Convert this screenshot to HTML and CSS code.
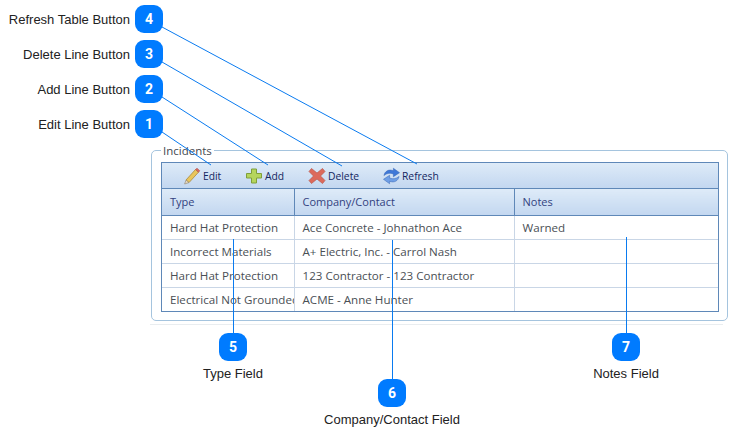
FILE: index.html
```html
<!DOCTYPE html>
<html>
  <head>
    <meta charset="UTF-8">
    <title>Incidents</title>
    <link rel="stylesheet" href="styles.css">
  </head>
  <body>
    <div class="screen">
      <fieldset class="panel">
        <legend>Incidents</legend>
        <div class="grid">
          <div class="toolbar">
            <button class="tool tool-edit">
              <svg width="18" height="18" viewBox="0 0 18 18">
                <path d="M3 13 L12.500 2.500 L15.500 5.200 L6 15.600 Z" fill="#e9c65c" stroke="#a98a3e" stroke-width="0.8"/>
                <path d="M12.500 2.500 L14 1.200 L16.800 3.800 L15.500 5.200 Z" fill="#d9695f" stroke="#b5534b" stroke-width="0.6"/>
                <path d="M3 13 L1.600 17 L6 15.600 Z" fill="#e8d9bd" stroke="#8d8371" stroke-width="0.6"/>
              </svg>
              Edit
            </button>
            <button class="tool tool-add">
              <svg width="18" height="18" viewBox="0 0 18 18">
                <path d="M6.500 2 H11.500 V6.500 H16.500 V11 H11.500 V16 H6.500 V11 H1.500 V6.500 H6.500 Z" fill="#b5d55c" stroke="#7f9f3a" stroke-linejoin="round"/>
              </svg>
              Add
            </button>
            <button class="tool tool-delete">
              <svg width="18" height="18" viewBox="0 0 18 18">
                <path d="M3.500 1.500 L9 6 L14.500 1.500 L17 4.500 L12.500 9 L17 13.500 L14.500 16.500 L9 12 L3.500 16.500 L1 13.500 L5.500 9 L1 4.500 Z" fill="#dc6a5c" stroke="#b9574c" stroke-width="0.7" stroke-linejoin="round"/>
              </svg>
              Delete
            </button>
            <button class="tool tool-refresh">
              <svg width="17" height="18" viewBox="0 0 18 18">
                <path d="M1 8.500 C2 3.500 6.500 1.500 11 3.500 L11 0.800 L17.500 5.500 L11 9.800 L11 6.800 C7.500 5.500 4 6 1 8.500 Z" fill="#3f78d8" stroke="#2f5fb0" stroke-width="0.5"/>
                <path d="M17 9.500 C16 14.500 11.500 16.500 7 14.500 L7 17.200 L0.500 12.500 L7 8.200 L7 11.200 C10.500 12.500 14 12 17 9.500 Z" fill="#6f9fe6" stroke="#2f5fb0" stroke-width="0.5"/>
              </svg>
              Refresh
            </button>
          </div>
          <table class="lines">
            <colgroup>
              <col class="col-type">
              <col class="col-company">
              <col class="col-notes">
            </colgroup>
            <thead>
              <tr><th>Type</th><th>Company/Contact</th><th>Notes</th></tr>
            </thead>
            <tbody>
              <tr><td>Hard Hat Protection</td><td>Ace Concrete - Johnathon Ace</td><td>Warned</td></tr>
              <tr><td>Incorrect Materials</td><td>A+ Electric, Inc. - Carrol Nash</td><td></td></tr>
              <tr><td>Hard Hat Protection</td><td>123 Contractor - 123 Contractor</td><td></td></tr>
              <tr><td>Electrical Not Grounded</td><td>ACME - Anne Hunter</td><td></td></tr>
            </tbody>
          </table>
        </div>
      </fieldset>
      <div class="rule"></div>

      <!-- Callout leader lines -->
      <svg class="leaders" width="737" height="438" viewBox="0 0 737 438">
        <line x1="162" y1="27" x2="417" y2="164"/>
        <line x1="162" y1="62" x2="342" y2="166"/>
        <line x1="162" y1="97" x2="268" y2="165"/>
        <line x1="162" y1="132" x2="211" y2="165"/>
        <line x1="233.500" y1="239" x2="233.500" y2="334"/>
        <line x1="392.500" y1="240" x2="392.500" y2="380"/>
        <line x1="626.500" y1="237" x2="626.500" y2="334"/>
      </svg>

      <!-- Callouts -->
      <div class="callout side c4"><span class="label">Refresh Table Button</span><span class="badge">4</span></div>
      <div class="callout side c3"><span class="label">Delete Line Button</span><span class="badge">3</span></div>
      <div class="callout side c2"><span class="label">Add Line Button</span><span class="badge">2</span></div>
      <div class="callout side c1"><span class="label">Edit Line Button</span><span class="badge">1</span></div>
      <div class="callout below c5"><span class="badge">5</span><span class="label">Type Field</span></div>
      <div class="callout below c6"><span class="badge">6</span><span class="label">Company/Contact Field</span></div>
      <div class="callout below c7"><span class="badge">7</span><span class="label">Notes Field</span></div>
    </div>
  </body>
</html>
```

FILE: styles.css
```css
* {
  box-sizing: border-box;
}
html, body {
  margin: 0;
  padding: 0;
  background: #fff;
}
.screen {
  position: relative;
  width: 737px;
  height: 438px;
  padding: 143px 10px 0 151px;
  overflow: hidden;
  font-family: "Open Sans", sans-serif;
}
/* Incidents panel */
.panel {
  margin: 0;
  padding: 4px 8px 8px 9px;
  width: 576px;
  height: 178px;
  border: 1px solid #a5c4de;
  border-radius: 5px;
}
.panel legend {
  padding: 0 2px;
  font-size: 11.500px;
  line-height: 15px;
  color: #44484f;
}
.grid {
  width: 558px;
  border: 1px solid #5f88b8;
}
.toolbar {
  display: flex;
  align-items: center;
  height: 26px;
  padding-left: 21px;
  background: linear-gradient(#deebf8, #c3d7f0);
  border-bottom: 1px solid #5f88b8;
}
.tool {
  display: flex;
  align-items: center;
  gap: 2px;
  padding: 0;
  border: none;
  background: none;
  font: 10.300px "Open Sans", sans-serif;
  color: #14265f;
}
.tool-edit { width: 62px; }
.tool-add { width: 63px; }
.tool-delete { width: 75px; }
/* Table */
.lines {
  width: 100%;
  table-layout: fixed;
  border-collapse: collapse;
  font-size: 11.600px;
}
.col-type { width: 132px; }
.col-company { width: 220px; }
.lines th {
  height: 26px;
  padding: 0 7px;
  text-align: left;
  font-weight: normal;
  font-size: 11px;
  color: #33427f;
  background: linear-gradient(#deebf8, #c3d7f0);
  border-left: 1px solid #5f88b8;
  border-bottom: 1px solid #5f88b8;
}
.lines td {
  height: 24px;
  padding: 0 7px;
  color: #4a4f55;
  white-space: nowrap;
  overflow: hidden;
  border-left: 1px solid #c9d6e6;
  border-bottom: 1px solid #c9d6e6;
}
.lines th:nth-child(n+2), .lines td:nth-child(n+2) {
  padding-left: 8px;
}
.lines th:first-child, .lines td:first-child {
  padding-left: 8px;
  border-left: none;
}
.lines tr:last-child td {
  border-bottom: none;
}
.rule {
  height: 1px;
  margin: 3px 4px 0 -1px;
  background: #e9edf0;
}
/* Callouts */
.leaders {
  position: absolute;
  left: 0;
  top: 0;
}
.leaders line {
  stroke: #0a7bf0;
  stroke-width: 1;
}
.callout {
  position: absolute;
  display: flex;
  align-items: center;
  font-family: "Liberation Sans", sans-serif;
  font-size: 13px;
  color: #222;
}
.side {
  right: 574px;
  gap: 5px;
}
.below {
  flex-direction: column;
  width: 200px;
  gap: 5px;
}
.badge {
  display: flex;
  align-items: center;
  justify-content: center;
  width: 28px;
  height: 28px;
  border-radius: 9px;
  background: #007bff;
  color: #fff;
  font-family: "Roboto", sans-serif;
  font-weight: 700;
  font-size: 14px;
}
.c4 { top: 5px; }
.c3 { top: 40px; }
.c2 { top: 75px; }
.c1 { top: 110px; }
.c5 { left: 133px; top: 333px; }
.c6 { left: 292px; top: 379px; }
.c7 { left: 526px; top: 333px; }
```
